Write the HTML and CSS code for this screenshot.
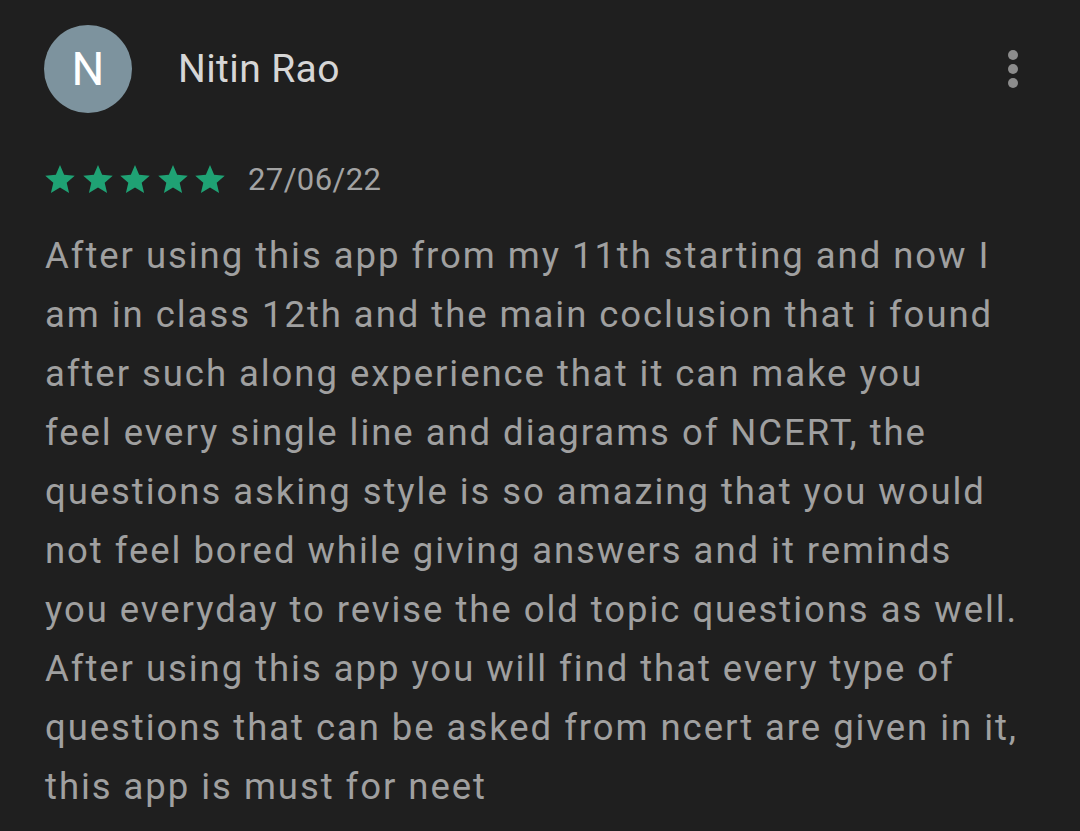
FILE: index.html
```html
<!DOCTYPE html>
<html>
<head>
<meta charset="utf-8">
<link rel="stylesheet" href="styles.css">
</head>
<body>
<div class="review">
  <div class="head">
    <div class="avatar">N</div>
    <div class="name">Nitin Rao</div>
    <div class="more" aria-label="More options"><span></span><span></span><span></span></div>
  </div>
  <div class="meta">
    <div class="stars">
      <svg viewBox="2 2 20 19"><path d="M12 17.27L18.18 21l-1.64-7.03L22 9.24l-7.19-.61L12 2 9.19 8.63 2 9.240l5.46 4.73L5.82 21z"/></svg>
      <svg viewBox="2 2 20 19"><path d="M12 17.27L18.18 21l-1.64-7.03L22 9.24l-7.19-.61L12 2 9.19 8.63 2 9.24l5.46 4.73L5.82 21z"/></svg>
      <svg viewBox="2 2 20 19"><path d="M12 17.27L18.18 21l-1.64-7.03L22 9.24l-7.19-.61L12 2 9.19 8.63 2 9.24l5.46 4.73L5.82 21z"/></svg>
      <svg viewBox="2 2 20 19"><path d="M12 17.27L18.18 21l-1.64-7.03L22 9.24l-7.19-.61L12 2 9.19 8.63 2 9.24l5.46 4.73L5.82 21z"/></svg>
      <svg viewBox="2 2 20 19"><path d="M12 17.27L18.18 21l-1.64-7.03L22 9.24l-7.19-.61L12 2 9.19 8.63 2 9.24l5.46 4.73L5.82 21z"/></svg>
    </div>
    <span class="date">27/06/22</span>
  </div>
  <p class="text">After using this app from my 11th starting and now I<br>am in class 12th and the main coclusion that i found<br>after such along experience that it can make you<br>feel every single line and diagrams of NCERT, the<br>questions asking style is so amazing that you would<br>not feel bored while giving answers and it reminds<br>you everyday to revise the old topic questions as well.<br>After using this app you will find that every type of<br>questions that can be asked from ncert are given in it,<br>this app is must for neet</p>
</div>
</body>
</html>
```
FILE: styles.css
```css
html, body {
  margin: 0;
  padding: 0;
  background: #1f1f1f;
}
body {
  width: 1080px;
  height: 831px;
  overflow: hidden;
  font-family: Roboto, "Liberation Sans", sans-serif;
}
.review {
  padding: 25px 62px 0 44px;
}
.head {
  display: flex;
  align-items: center;
  height: 88px;
}
.avatar {
  width: 88px;
  height: 88px;
  border-radius: 50%;
  background: #7d939e;
  color: #ffffff;
  font-size: 46px;
  display: flex;
  align-items: center;
  justify-content: center;
  flex: none;
}
.name {
  margin-left: 46px;
  font-size: 39px;
  letter-spacing: 0.4px;
  color: #d6d6d6;
  flex: 1;
}
.more {
  display: flex;
  flex-direction: column;
  gap: 4px;
  align-items: center;
}
.more span {
  width: 10px;
  height: 10px;
  border-radius: 50%;
  background: #8c8c8c;
}
.meta {
  display: flex;
  align-items: center;
  margin-top: 52px;
  height: 28px;
}
.stars {
  display: flex;
  gap: 7.5px;
  margin-left: 1px;
}
.stars svg {
  width: 30px;
  height: 28px;
  fill: #1fa274;
}
.date {
  margin-left: 23px;
  font-size: 31px;
  letter-spacing: 0.4px;
  color: #a3a3a3;
}
.text {
  margin: 33px 0 0 1px;
  font-size: 36.5px;
  line-height: 59px;
  letter-spacing: 1.95px;
  color: #a0a0a0;
  white-space: nowrap;
}
```
